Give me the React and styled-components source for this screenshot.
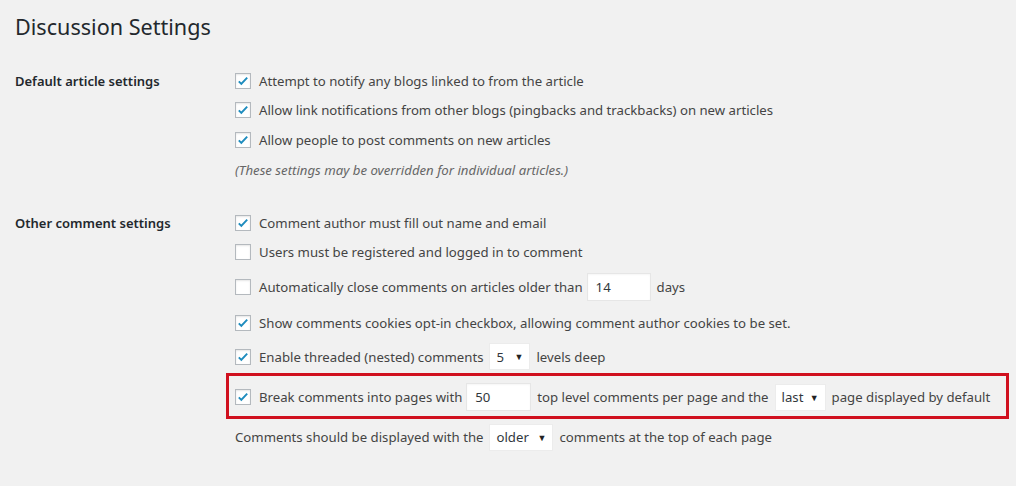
import styled, { createGlobalStyle } from 'styled-components';

const Global = createGlobalStyle`
  html, body {
    margin: 0;
    padding: 0;
    background: #f1f1f1;
  }
  body {
    font-family: "Noto Sans", "Open Sans", sans-serif;
    font-size: 13.2px;
    color: #444;
  }
`;

const Page = styled.div`
  width: 1016px;
  height: 486px;
  padding: 0 15px;
  box-sizing: border-box;
  overflow: hidden;
`;

const Title = styled.h1`
  margin: 0;
  padding: 12px 0 0;
  height: 54px;
  box-sizing: border-box;
  font-size: 21.6px;
  font-weight: 400;
  color: #23282d;
`;

const Section = styled.div`
  display: grid;
  grid-template-columns: 220px 1fr;
  margin-top: ${({ $top }) => $top}px;
`;

const Label = styled.div`
  font-weight: 600;
  font-size: 13px;
  color: #23282d;
  height: 30px;
  display: flex;
  align-items: center;
`;

const Fields = styled.div`
  display: flex;
  flex-direction: column;
`;

const Row = styled.div`
  display: flex;
  align-items: center;
  height: ${({ $h }) => $h || 30}px;
  white-space: nowrap;
`;

const Highlight = styled.div`
  display: flex;
  align-items: center;
  height: 46px;
  margin-left: -9px;
  width: 783px;
  box-sizing: border-box;
  border: 3px solid #d0101e;
  padding: 2px 0 0 6px;
  white-space: nowrap;
`;

const Note = styled.div`
  font-style: italic;
  color: #666;
  height: 30px;
  display: flex;
  align-items: center;
`;

const Box = styled.span`
  width: 16px;
  height: 16px;
  box-sizing: border-box;
  border: 1px solid #b4b9be;
  background: #fff;
  box-shadow: inset 0 1px 2px rgba(0, 0, 0, 0.1);
  display: inline-flex;
  align-items: center;
  justify-content: center;
  margin-right: 8px;
  flex: none;
`;

const TextInput = styled.span`
  display: inline-flex;
  align-items: center;
  width: ${({ $w }) => $w}px;
  height: 28px;
  box-sizing: border-box;
  background: #fff;
  border: 1px solid #e6e6e6;
  box-shadow: inset 0 1px 2px rgba(0, 0, 0, 0.04);
  padding-left: 8px;
  margin: 0 6px 0 ${({ $ml }) => $ml ?? 6}px;
  color: #32373c;
`;

const Select = styled.span`
  display: inline-flex;
  align-items: center;
  justify-content: space-between;
  width: ${({ $w }) => $w}px;
  height: 27px;
  box-sizing: border-box;
  background: #fff;
  border: 1px solid #ececec;
  padding: 0 6px;
  margin: 0 6px;
  color: #32373c;
`;

const Arrow = styled.span`
  font-size: 9px;
  color: #222;
`;

const Check = ({ on }) => (
  <Box>
    {on && (
      <svg width="14" height="14" viewBox="0 0 20 20">
        <path d="M4 10.5l3.6 3.6L16 5.2" fill="none" stroke="#1e8cbe" strokeWidth="2.8" />
      </svg>
    )}
  </Box>
);

export default function App() {
  return (
    <Page>
      <Global />
      <Title>Discussion Settings</Title>
      <Section $top={12}>
        <Label>Default article settings</Label>
        <Fields>
          <Row $h={29}><Check on />Attempt to notify any blogs linked to from the article</Row>
          <Row><Check on />Allow link notifications from other blogs (pingbacks and trackbacks) on new articles</Row>
          <Row><Check on />Allow people to post comments on new articles</Row>
          <Note>(These settings may be overridden for individual articles.)</Note>
        </Fields>
      </Section>
      <Section $top={23}>
        <Label>Other comment settings</Label>
        <Fields>
          <Row $h={29}><Check on />Comment author must fill out name and email</Row>
          <Row><Check />Users must be registered and logged in to comment</Row>
          <Row $h={39}>
            <Check />Automatically close comments on articles older than
            <TextInput $w={64} $ml={4}>14</TextInput>days
          </Row>
          <Row $h={34}><Check on />Show comments cookies opt-in checkbox, allowing comment author cookies to be set.</Row>
          <Row $h={33}>
            <Check on />Enable threaded (nested) comments
            <Select $w={41}>5<Arrow>▼</Arrow></Select>levels deep
          </Row>
          <Highlight>
            <Check on />Break comments into pages with
            <TextInput $w={65} $ml={4}>50</TextInput>top level comments per page and the
            <Select $w={51}>last<Arrow>▼</Arrow></Select>page displayed by default
          </Highlight>
          <Row $h={36}>
            Comments should be displayed with the
            <Select $w={64}>older<Arrow>▼</Arrow></Select>comments at the top of each page
          </Row>
        </Fields>
      </Section>
    </Page>
  );
}
